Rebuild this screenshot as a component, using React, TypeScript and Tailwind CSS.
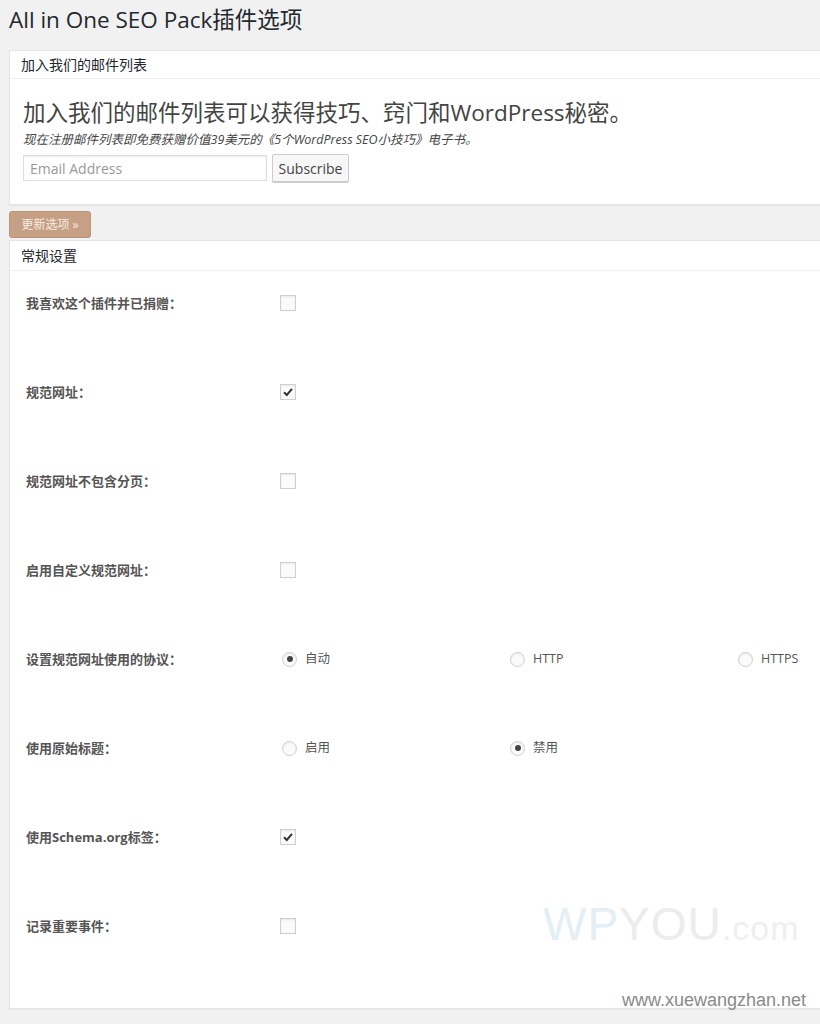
import React from "react";

const font = {
  fontFamily: '"Open Sans", "Noto Sans CJK SC", sans-serif',
};

interface Row {
  label: string;
  kind: "check" | "radio";
  checked?: boolean;
  options?: { text: string; on: boolean }[];
}

const rows: Row[] = [
  { label: "我喜欢这个插件并已捐赠：", kind: "check", checked: false },
  { label: "规范网址：", kind: "check", checked: true },
  { label: "规范网址不包含分页：", kind: "check", checked: false },
  { label: "启用自定义规范网址：", kind: "check", checked: false },
  {
    label: "设置规范网址使用的协议：",
    kind: "radio",
    options: [
      { text: "自动", on: true },
      { text: "HTTP", on: false },
      { text: "HTTPS", on: false },
    ],
  },
  {
    label: "使用原始标题：",
    kind: "radio",
    options: [
      { text: "启用", on: false },
      { text: "禁用", on: true },
    ],
  },
  { label: "使用Schema.org标签：", kind: "check", checked: true },
  { label: "记录重要事件：", kind: "check", checked: false },
];

const Checkbox: React.FC<{ checked?: boolean }> = ({ checked }) => (
  <div className="w-[16px] h-[16px] border border-[#cfcfcf] bg-[#fbfbfb] shadow-[inset_0_1px_2px_rgba(0,0,0,0.08)] flex items-center justify-center">
    {checked && (
      <svg width="12" height="12" viewBox="0 0 12 12">
        <path
          d="M2 6.2 L4.8 9 L10 2.8"
          fill="none"
          stroke="#333"
          strokeWidth="2"
        />
      </svg>
    )}
  </div>
);

const Radio: React.FC<{ on: boolean }> = ({ on }) => (
  <div className="w-[15px] h-[15px] shrink-0 rounded-full border border-[#cfcfcf] bg-[#fbfbfb] shadow-[inset_0_1px_2px_rgba(0,0,0,0.08)] flex items-center justify-center">
    {on && <div className="w-[6px] h-[6px] rounded-full bg-[#444]" />}
  </div>
);

const App: React.FC = () => {
  return (
    <div
      className="relative w-[820px] h-[1024px] overflow-hidden bg-[#f1f1f1] text-[#444]"
      style={font}
    >
      <h1 className="pl-[9px] pt-[5px] h-[50px] text-[22.5px] leading-[30px] text-[#23282d] font-normal">
        All in One SEO Pack插件选项
      </h1>

      {/* mailing list */}
      <div className="ml-[9px] h-[155px] bg-white border border-[#e5e5e5] border-r-0 shadow-[0_1px_1px_rgba(0,0,0,0.04)]">
        <div className="h-[28px] pl-[11px] flex items-center text-[14px] text-[#23282d] border-b border-[#eeeeee]">
          加入我们的邮件列表
        </div>
        <div className="pl-[13px] pt-[18px]">
          <div className="text-[22.5px] leading-[32px] text-[#444]">
            加入我们的邮件列表可以获得技巧、窍门和WordPress秘密。
          </div>
          <div className="text-[12.5px] leading-[16px] italic text-[#444] mt-[3px] whitespace-nowrap">
            现在注册邮件列表即免费获赠价值39美元的《5个WordPress SEO小技巧》电子书。
          </div>
          <div className="flex items-center gap-[5px] mt-[6px]">
            <div className="w-[244px] h-[26px] border border-[#dddddd] shadow-[inset_0_1px_2px_rgba(0,0,0,0.07)] flex items-center pl-[6px] text-[14px] text-[#999]">
              Email Address
            </div>
            <div className="w-[77px] h-[28px] border border-[#cccccc] bg-[#f7f7f7] rounded-[2px] shadow-[0_1px_0_#ccc] flex items-center justify-center text-[14px] text-[#444]">
              Subscribe
            </div>
          </div>
        </div>
      </div>

      {/* update button */}
      <div className="ml-[9px] mt-[6px] w-[82px] h-[27px] rounded-[3px] bg-[#c6a084] border border-[#bb9477] flex items-center justify-center text-[12px] text-[#f6ece3]">
        更新选项 »
      </div>

      {/* general settings */}
      <div className="ml-[9px] mt-[2px] h-[769px] bg-white border border-[#e5e5e5] border-r-0 shadow-[0_1px_1px_rgba(0,0,0,0.04)]">
        <div className="h-[30px] pl-[11px] flex items-center text-[14px] text-[#23282d] border-b border-[#f1f1f1]">
          常规设置
        </div>
        {rows.map((row) => (
          <div key={row.label} className="h-[89px] flex items-start pt-[23px]">
            <div className="w-[270px] shrink-0 pl-[16px] text-[13px] leading-[18px] font-bold text-[#555] whitespace-nowrap">
              {row.label}
            </div>
            {row.kind === "check" ? (
              <div className="pt-[1px]">
                <Checkbox checked={row.checked} />
              </div>
            ) : (
              <div className="flex pl-[2px]">
                {row.options!.map((o) => (
                  <div
                    key={o.text}
                    className="w-[228px] shrink-0 flex items-center gap-[8px] h-[18px] text-[12.5px] text-[#555] whitespace-nowrap"
                  >
                    <Radio on={o.on} />
                    <span>{o.text}</span>
                  </div>
                ))}
              </div>
            )}
          </div>
        ))}
      </div>

      {/* watermarks */}
      <div
        className="absolute left-[543px] top-[898px] flex items-baseline text-[46px] leading-[52px] tracking-[1px]"
        style={{ fontFamily: '"Liberation Sans", Arial, sans-serif' }}
      >
        <span className="text-[#e3eef5]">WP</span>
        <span className="text-[#ececec]">YOU</span>
        <span className="text-[34px] text-[#efefef]">.com</span>
      </div>
      <div
        className="absolute left-[622px] top-[989px] text-[18px] leading-[22px] text-[#8a8a8a]"
        style={{ fontFamily: '"Liberation Sans", Arial, sans-serif' }}
      >
        www.xuewangzhan.net
      </div>
    </div>
  );
};

export default App;
